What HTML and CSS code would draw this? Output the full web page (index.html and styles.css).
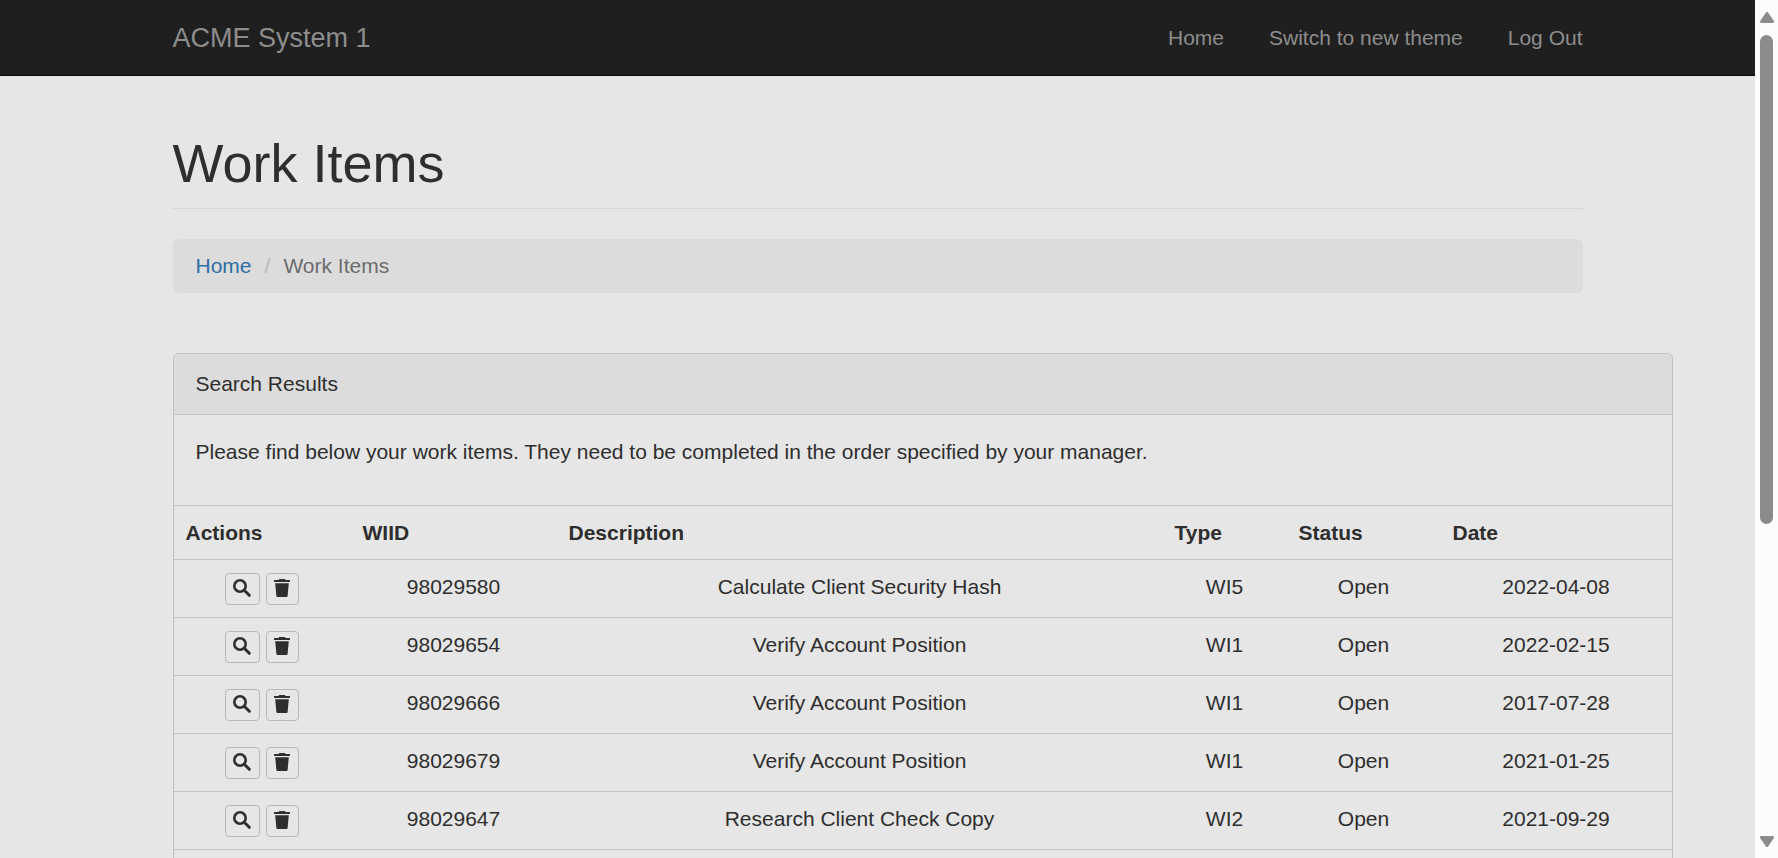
FILE: index.html
```html
<!DOCTYPE html>
<html lang="en">
<head>
<meta charset="utf-8">
<title>ACME System 1 - Work Items</title>
<link rel="stylesheet" href="styles.css">
</head>
<body>
<svg class="symbols" aria-hidden="true">
  <symbol id="search" viewBox="0 0 18 18"><circle cx="7" cy="7" r="5.700" fill="none" stroke="#2e2e2e" stroke-width="2.600"/><path d="M11.500 11.500 16.300 16.300" stroke="#2e2e2e" stroke-width="3" stroke-linecap="round"/></symbol>
  <symbol id="trash" viewBox="0 0 16 18"><path d="M5.500 0h5q.7 0 .9 1H15.500q.5 0 .5.500V2.500q0 .5-.5.500H.5Q0 3 0 2.500V1.500Q0 1 .5 1H4.600Q4.800 0 5.500 0zM1.200 4.200H14.800L13.600 17q-.1 1-1 1H3.400q-.9 0-1-1z"/></symbol>
</svg>
<div class="page">
  <header class="navbar">
    <div class="container navbar-inner">
      <a class="brand" href="#">ACME System 1</a>
      <nav class="nav">
        <a href="#">Home</a>
        <a href="#">Switch to new theme</a>
        <a href="#">Log Out</a>
      </nav>
    </div>
  </header>
  <main class="container content">
    <h1 class="page-header">Work Items</h1>
    <nav class="breadcrumb">
      <a href="#">Home</a>
      <span class="separator">/</span>
      <span class="active">Work Items</span>
    </nav>
    <section class="panel">
      <div class="panel-heading">Search Results</div>
      <p class="panel-body">Please find below your work items. They need to be completed in the order specified by your manager.</p>
      <table class="table">
        <colgroup>
          <col class="col-actions"><col class="col-wiid"><col><col class="col-type"><col class="col-status"><col class="col-date">
        </colgroup>
        <thead>
          <tr><th>Actions</th><th>WIID</th><th>Description</th><th>Type</th><th>Status</th><th>Date</th></tr>
        </thead>
        <tbody>
          <tr>
            <td><div class="actions"><button class="btn" aria-label="View"><svg class="icon-search"><use href="#search"/></svg></button><button class="btn" aria-label="Delete"><svg class="icon-trash"><use href="#trash"/></svg></button></div></td>
            <td>98029580</td><td>Calculate Client Security Hash</td><td>WI5</td><td>Open</td><td>2022-04-08</td>
          </tr>
          <tr>
            <td><div class="actions"><button class="btn" aria-label="View"><svg class="icon-search"><use href="#search"/></svg></button><button class="btn" aria-label="Delete"><svg class="icon-trash"><use href="#trash"/></svg></button></div></td>
            <td>98029654</td><td>Verify Account Position</td><td>WI1</td><td>Open</td><td>2022-02-15</td>
          </tr>
          <tr>
            <td><div class="actions"><button class="btn" aria-label="View"><svg class="icon-search"><use href="#search"/></svg></button><button class="btn" aria-label="Delete"><svg class="icon-trash"><use href="#trash"/></svg></button></div></td>
            <td>98029666</td><td>Verify Account Position</td><td>WI1</td><td>Open</td><td>2017-07-28</td>
          </tr>
          <tr>
            <td><div class="actions"><button class="btn" aria-label="View"><svg class="icon-search"><use href="#search"/></svg></button><button class="btn" aria-label="Delete"><svg class="icon-trash"><use href="#trash"/></svg></button></div></td>
            <td>98029679</td><td>Verify Account Position</td><td>WI1</td><td>Open</td><td>2021-01-25</td>
          </tr>
          <tr>
            <td><div class="actions"><button class="btn" aria-label="View"><svg class="icon-search"><use href="#search"/></svg></button><button class="btn" aria-label="Delete"><svg class="icon-trash"><use href="#trash"/></svg></button></div></td>
            <td>98029647</td><td>Research Client Check Copy</td><td>WI2</td><td>Open</td><td>2021-09-29</td>
          </tr>
        </tbody>
      </table>
    </section>
  </main>
</div>
<div class="scrollbar" aria-hidden="true">
  <svg class="arrow" viewBox="0 0 14 11"><path d="M7 1.500 12.500 9.500H1.500z"/></svg>
  <div class="track"><div class="thumb"></div></div>
  <svg class="arrow" viewBox="0 0 14 11"><path d="M7 9.500 1.500 1.500H12.500z"/></svg>
</div>
</body>
</html>
```
FILE: styles.css
```css
* { box-sizing: border-box; }

body {
  margin: 0;
  height: 100vh;
  overflow: hidden;
  display: grid;
  grid-template-columns: minmax(0, 1fr) 23px;
  background: #e6e6e6;
  color: #2e2e2e;
  font-family: "Liberation Sans", Arial, sans-serif;
  font-size: 21px;
  line-height: 30px;
}

a { text-decoration: none; color: #2e6ea5; }

.symbols { display: none; }

.page {
  height: 100vh;
  overflow: hidden;
  display: flex;
  flex-direction: column;
}

.container { width: 100%; max-width: 1410px; margin: 0 auto; }

.navbar {
  flex: none;
  background: #1f1f1f;
  border-bottom: 1px solid #080808;
}

.navbar-inner {
  display: flex;
  justify-content: space-between;
  align-items: center;
  min-height: 75px;
}

.brand { font-size: 27px; color: #8d8d8d; }

.nav { display: flex; gap: 45px; }
.nav a { color: #8d8d8d; }

.content {
  flex: 1;
  display: flex;
  flex-direction: column;
}

.page-header {
  margin: 57px 0 30px;
  padding-bottom: 15px;
  border-bottom: 1px solid #d6d6d6;
  font-size: 54px;
  font-weight: 400;
  line-height: 60px;
}

.breadcrumb {
  display: flex;
  gap: 13px;
  padding: 12px 23px;
  margin-bottom: 60px;
  border-radius: 6px;
  background: #dcdcdc;
}

.separator { color: #b8b8b8; }
.active { color: #6b6b6b; }

.panel {
  flex: 1;
  margin-right: -90px;
  border: 1px solid #c2c2c2;
  border-bottom: 0;
  border-radius: 6px 6px 0 0;
}

.panel-heading {
  padding: 15px 22px;
  border-bottom: 1px solid #c2c2c2;
  border-radius: 5px 5px 0 0;
  background: #dcdcdc;
}

.panel-body { margin: 0; padding: 22px 22px 38px; }

.table {
  width: 100%;
  table-layout: fixed;
  border-collapse: separate;
  border-spacing: 0;
  border-top: 1px solid #c2c2c2;
}

.col-actions { width: 177px; }
.col-wiid { width: 206px; }
.col-type { width: 124px; }
.col-status { width: 154px; }
.col-date { width: 231px; }

th, td {
  padding: 12px;
  border-bottom: 1px solid #c2c2c2;
  vertical-align: top;
}

th { padding-bottom: 11px; text-align: left; }
td { text-align: center; }

.actions { display: flex; justify-content: center; gap: 6px; padding-top: 1px; }

.btn {
  display: flex;
  align-items: center;
  height: 32px;
  padding: 0 8px 2px 7px;
  border: 1px solid #b8b8b8;
  border-radius: 4px;
  background: #e6e6e6;
}

.icon-search { width: 18px; height: 18px; }
.icon-trash { width: 16px; height: 18px; fill: #2e2e2e; }

.scrollbar {
  display: flex;
  flex-direction: column;
  align-items: center;
  padding: 12px 0 11px;
  background: #fcfcfc;
}

.arrow {
  width: 14px;
  height: 11px;
  fill: #8b8b8b;
  stroke: #8b8b8b;
  stroke-width: 3;
  stroke-linejoin: round;
}

.track { flex: 1; padding: 12px 0; }
.thumb { width: 13px; height: 62%; border-radius: 7px; background: #8b8b8b; }
```
